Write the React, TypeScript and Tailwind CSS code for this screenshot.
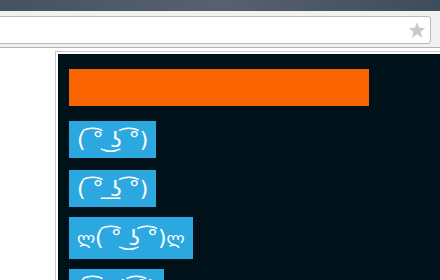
import React from "react";

const faces = [
    { pre: "", text: "( \u0361\u00b0 \u035c\u0296 \u0361\u00b0)", post: "", h: "h-[37px]", mb: "mb-[12px]" },
    { pre: "", text: "( \u0361\u00b0 \u035f\u0296 \u0361\u00b0)", post: "", h: "h-[37px]", mb: "mb-[10px]" },
    { pre: "\u10da", text: "( \u0361\u00b0 \u035c\u0296 \u0361\u00b0)", post: "\u10da", h: "h-[42px]", mb: "mb-[10px]" },
    { pre: "", text: "( \u0361~ \u035c\u0296 \u0361\u00b0)", post: "", h: "h-[37px]", mb: "" },
];

export default function App() {
    return (
        <div className="w-[440px] h-[280px] overflow-hidden bg-white font-['DejaVu_Sans',sans-serif]">
            {/* window frame */}
            <div className="h-[11px] bg-gradient-to-r from-[#45525f] via-[#56626f] to-[#3f4c5c]" />

            {/* toolbar */}
            <div className="bg-[#f1f1f1] pt-[5px] pb-[3px] border-b border-[#b4b4b4]">
                <div className="-ml-[6px] mr-[9px] h-[28px] bg-white border border-[#bcbcbc] rounded-[3px] flex items-center justify-end pr-[4px]">
                    <svg width="18" height="18" viewBox="0 0 24 24">
                        <polygon
                            points="12,1.5 15,9 23,9.3 16.8,14.3 19,22.5 12,17.8 5,22.5 7.2,14.3 1,9.3 9,9"
                            fill="#c9c9c9"
                        />
                    </svg>
                </div>
            </div>

            {/* popup */}
            <div className="ml-[55px] mt-[3px] border border-[#c6c6c6] border-r-0 bg-white pl-[2px] pt-[2px]">
                <div className="bg-[#00111a] pl-[11px] pt-[15px] pb-[40px] flex flex-col items-start">
                    <div className="w-[300px] h-[37px] shrink-0 bg-[#f96300] mb-[15px]" />
                    {faces.map((f, i) => (
                        <button
                            key={i}
                            className={`${f.h} ${f.mb} px-[8px] bg-[#2ca8e0] text-white text-[22px] leading-none flex items-center whitespace-pre shrink-0`}
                        >
                            {f.pre && <span className="text-[17px]">{f.pre}</span>}
                            {f.text}
                            {f.post && <span className="text-[17px]">{f.post}</span>}
                        </button>
                    ))}
                </div>
            </div>
        </div>
    );
}
